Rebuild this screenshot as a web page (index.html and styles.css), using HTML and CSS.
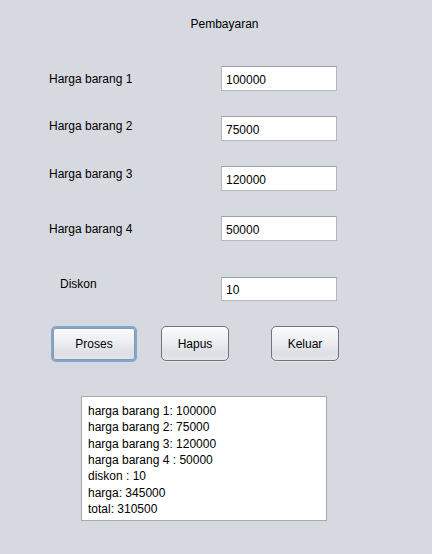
FILE: index.html
```html
<!DOCTYPE html>
<html>
<head>
<meta charset="utf-8">
<link rel="stylesheet" href="styles.css">
</head>
<body>
<div class="frame">
  <div class="title">Pembayaran</div>
  <div class="form">
    <div class="row r1"><span class="label">Harga barang 1</span><div class="field">100000</div></div>
    <div class="row r2"><span class="label">Harga barang 2</span><div class="field">75000</div></div>
    <div class="row r3"><span class="label">Harga barang 3</span><div class="field">120000</div></div>
    <div class="row r4"><span class="label">Harga barang 4</span><div class="field">50000</div></div>
    <div class="row r5"><span class="label">Diskon</span><div class="field short">10</div></div>
  </div>
  <div class="buttons">
    <button class="btn proses focused">Proses</button>
    <button class="btn hapus">Hapus</button>
    <button class="btn keluar">Keluar</button>
  </div>
  <div class="output">
    <div>harga barang 1: 100000</div>
    <div>harga barang 2: 75000</div>
    <div>harga barang 3: 120000</div>
    <div>harga barang 4 : 50000</div>
    <div>diskon : 10</div>
    <div>harga: 345000</div>
    <div>total: 310500</div>
  </div>
</div>
</body>
</html>
```

FILE: styles.css
```css
html, body {
  margin: 0;
  padding: 0;
  background: #d6d9df;
}
body {
  width: 432px;
  height: 554px;
  font-family: "Liberation Sans", Arial, sans-serif;
  font-size: 12px;
  color: #000;
}
.frame {
  padding-top: 16px;
}
.title {
  text-align: center;
  line-height: 16px;
  height: 16px;
  padding-left: 17px;
}
.form {
  margin-top: 34px;
  padding-left: 49px;
}
.row {
  display: grid;
  grid-template-columns: 172px 116px;
  height: 25px;
  margin-bottom: 25px;
}
.row .label {
  line-height: 16px;
  align-self: start;
}
.r1 .label { margin-top: 5px; }
.r2 .label { margin-top: 2px; }
.r3 .label { margin-top: 0; }
.r4 .label { margin-top: 5px; }
.r4 { margin-bottom: 36px; }
.r5 .label { margin-top: -1px; margin-left: 11px; }
.r5 { height: 24px; margin-bottom: 0; }
.field {
  box-sizing: border-box;
  height: 25px;
  background: #fff;
  border: 1px solid #b3b7bf;
  border-top-color: #9a9ea6;
  padding: 2px 4px 0 4px;
  line-height: 22px;
  font-size: 12px;
}
.field.short { height: 24px; line-height: 21px; }
.buttons {
  display: flex;
  align-items: flex-start;
  margin-top: 25px;
  padding-left: 51px;
}
.btn {
  box-sizing: border-box;
  font-family: "Liberation Sans", Arial, sans-serif;
  font-size: 12px;
  color: #000;
  height: 35px;
  border: 1px solid #6f737b;
  border-radius: 5px;
  background: linear-gradient(#fbfbfc 0%, #eceef1 45%, #dcdfe4 80%, #e4e6ea 100%);
  padding: 0;
  margin: 0;
  box-shadow: 0 1px 0 rgba(255,255,255,0.4);
}
.btn.proses {
  width: 86px;
  height: 36px;
  border: 2px solid #82a6cf;
  box-shadow: inset 0 0 0 1px #8d97a6;
}
.btn.hapus {
  width: 68px;
  margin-left: 24px;
}
.btn.keluar {
  width: 68px;
  margin-left: 42px;
}
.output {
  box-sizing: border-box;
  margin-top: 34px;
  margin-left: 81px;
  width: 246px;
  height: 125px;
  background: #fff;
  border: 1px solid #a5a9b1;
  padding: 6px 6px 0 6px;
  line-height: 16.33px;
  font-size: 12px;
}
```
